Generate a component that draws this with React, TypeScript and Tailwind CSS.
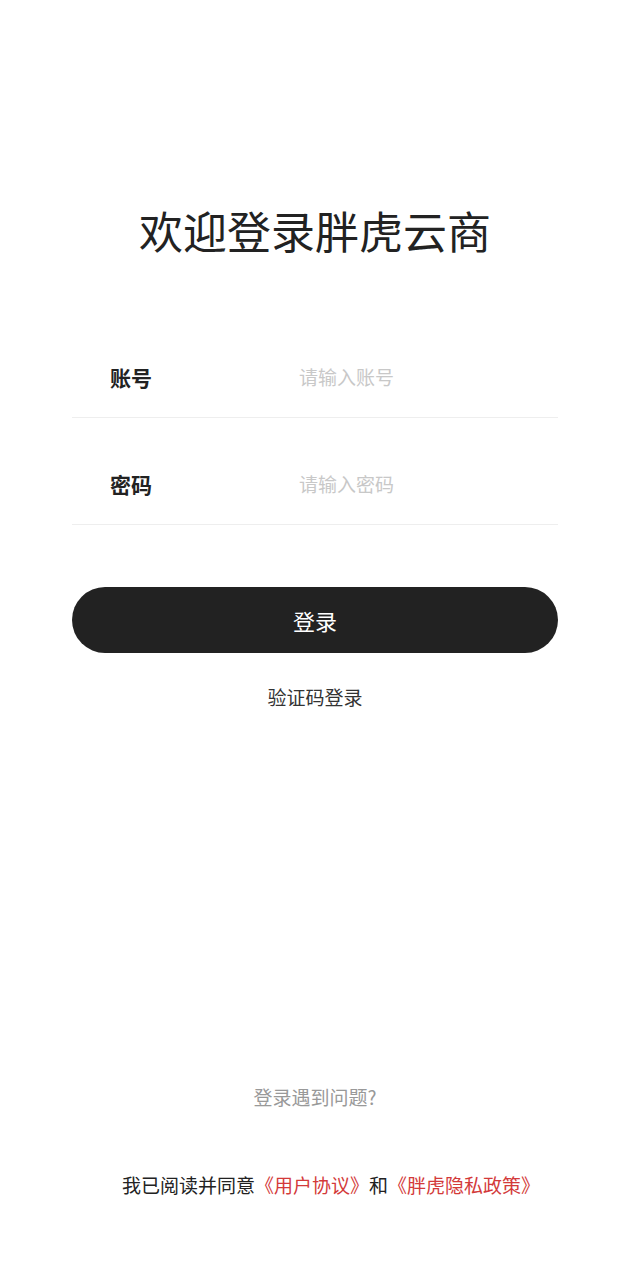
import React from 'react';

const font = { fontFamily: '"Noto Sans CJK SC", "Noto Sans", sans-serif' };

const Field: React.FC<{ label: string; placeholder: string; type?: string }> = ({ label, placeholder, type = 'text' }) => {
  return (
    <div className="flex h-[80px] items-center border-b border-[#eeeeee] pl-[38px]">
      <span className="w-[189px] shrink-0 text-[21px] font-bold text-[#222222]">{label}</span>
      <input
        type={type}
        placeholder={placeholder}
        className="min-w-0 flex-1 bg-transparent text-[19px] text-[#222222] outline-none placeholder:text-[#c8c8c8]"
      />
    </div>
  );
};

export default function App() {
  return (
    <div className="flex h-[1280px] w-full flex-col bg-white" style={font}>
      <h1 className="mt-[200px] text-center text-[44px] font-normal leading-[60px] text-[#222222]">
        欢迎登录胖虎云商
      </h1>

      <div className="mx-[72px] mt-[78px] flex flex-col gap-[27px]">
        <Field label="账号" placeholder="请输入账号" />
        <Field label="密码" placeholder="请输入密码" type="password" />
      </div>

      <div className="mx-[72px] mt-[62px]">
        <button className="flex h-[66px] w-full items-center justify-center rounded-full bg-[#222222] text-[22px] text-white">
          登录
        </button>
      </div>

      <div className="mt-[30px] text-center text-[19px] leading-[28px] text-[#333333]">验证码登录</div>

      <div className="mt-auto text-center text-[19px] leading-[28px] text-[#999999]">登录遇到问题?</div>

      <div className="mb-[81px] mt-[60px] pl-[32px] text-center text-[19px] leading-[28px] text-[#222222]">
        我已阅读并同意<span className="text-[#d33a3a]">《用户协议》</span>和<span className="text-[#d33a3a]">《胖虎隐私政策》</span>
      </div>
    </div>
  );
}
